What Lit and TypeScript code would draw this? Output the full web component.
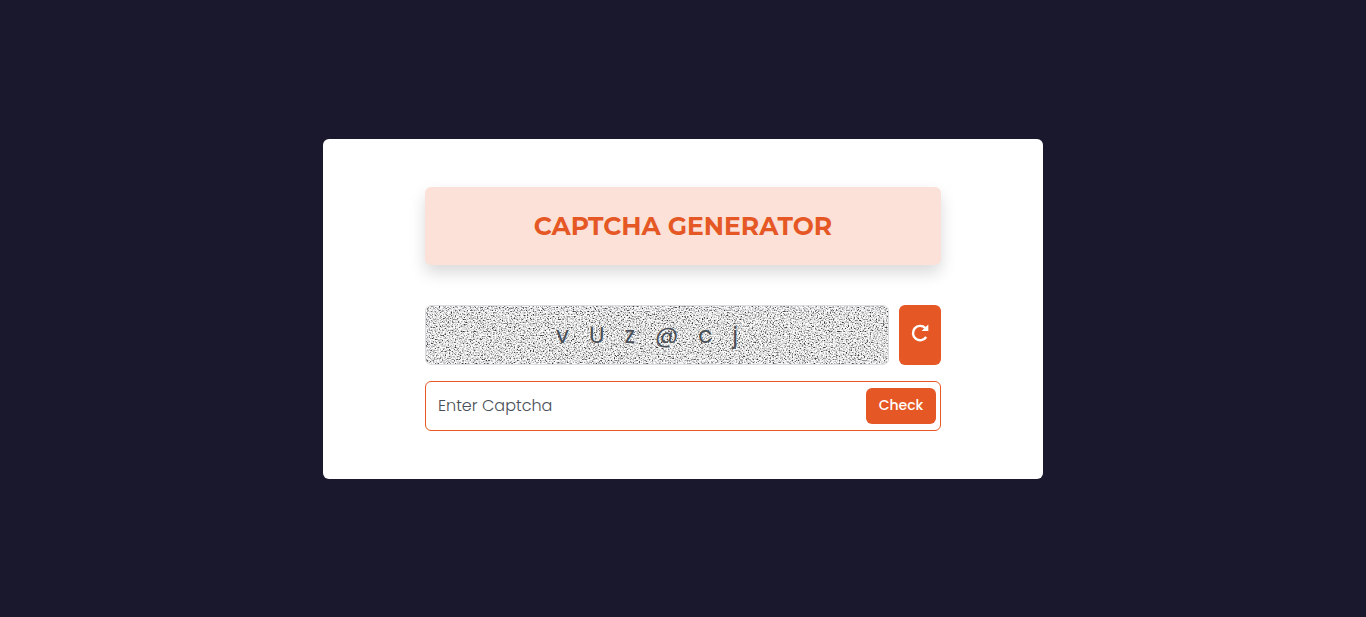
import { LitElement, html, css } from "lit";
import { customElement, state } from "lit/decorators.js";

const CHARACTERS = "ABCDEFGHIJKLMNOPQRSTUVWXYZabcdefghijklmnopqrstuvwxyz0123456789@#$%";

@customElement("app-root")
export class AppRoot extends LitElement {
  static styles = css`
    :host {
      display: flex;
      align-items: center;
      justify-content: center;
      box-sizing: border-box;
      min-height: 100vh;
      padding: 16px;
      background: #1a182c;
      font-family: Poppins, Inter, sans-serif;
    }
    * {
      box-sizing: border-box;
    }
    .card {
      width: 100%;
      max-width: 720px;
      padding: 48px 16px;
      border-radius: 6px;
      background: #fff;
    }
    .content {
      max-width: 516px;
      margin: 0 auto;
    }
    .title {
      margin: 0 0 40px;
      padding: 24px 16px;
      border-radius: 6px;
      background: #fbe1d8;
      box-shadow: 0 8px 16px rgba(0, 0, 0, 0.15);
      color: #e55825;
      font-family: Montserrat, Inter, sans-serif;
      font-size: 25px;
      line-height: 30px;
      font-weight: 700;
      text-align: center;
      text-transform: uppercase;
    }
    .challenge {
      display: flex;
      gap: 10px;
      margin-bottom: 16px;
    }
    .captcha {
      position: relative;
      flex: 1;
      height: 60px;
      overflow: hidden;
      border: 1px solid #dcdce0;
      border-radius: 6px;
      color: #494f57;
      font-size: 23px;
      line-height: 58px;
      letter-spacing: 20px;
      text-align: center;
    }
    .noise {
      position: absolute;
      inset: 0;
      width: 100%;
      height: 100%;
    }
    .code {
      position: relative;
    }
    .button {
      border: 0;
      border-radius: 6px;
      background: #e55825;
      color: #fff;
      font-family: inherit;
      cursor: pointer;
    }
    .refresh {
      display: flex;
      align-items: center;
      justify-content: center;
      width: 42px;
      padding: 0 0 4px;
    }
    .entry {
      display: flex;
      align-items: center;
      height: 50px;
      padding: 0 4px 0 12px;
      border: 1px solid #e55825;
      border-radius: 6px;
    }
    .field {
      flex: 1;
      min-width: 0;
      height: 100%;
      padding: 0;
      border: 0;
      outline: 0;
      background: none;
      color: #494f57;
      font-family: inherit;
      font-size: 16px;
      font-weight: 300;
    }
    .field::placeholder {
      color: #494f57;
      opacity: 1;
    }
    .check {
      width: 70px;
      height: 36px;
      padding: 0;
      font-size: 14px;
      font-weight: 500;
    }
  `;

  @state() private code = "vUz@cj";

  private refresh() {
    this.code = Array.from(
      { length: 6 },
      () => CHARACTERS[Math.floor(Math.random() * CHARACTERS.length)],
    ).join("");
  }

  render() {
    return html`
      <main class="card">
        <div class="content">
          <h1 class="title">Captcha Generator</h1>
          <div class="challenge">
            <div class="captcha">
              <svg class="noise" aria-hidden="true">
                <filter id="grain" x="0" y="0" width="100%" height="100%" color-interpolation-filters="sRGB">
                  <feTurbulence type="fractalNoise" baseFrequency="0.68 0.75" numOctaves="2" seed="7" />
                  <feColorMatrix
                    values="2.1 0.8 0 0 -0.78
                            2.1 0.8 0 0 -0.78
                            2.1 0.8 0 0 -0.78
                            0 0 0 0 1"
                  />
                  <feComponentTransfer>
                    <feFuncR type="table" tableValues="0.2 0.42 0.66 0.84 0.95 1" />
                    <feFuncG type="table" tableValues="0.2 0.42 0.66 0.84 0.95 1" />
                    <feFuncB type="table" tableValues="0.2 0.42 0.66 0.84 0.95 1" />
                  </feComponentTransfer>
                </filter>
                <rect width="100%" height="100%" filter="url(#grain)" />
              </svg>
              <span class="code">${this.code}</span>
            </div>
            <button class="button refresh" type="button" aria-label="New captcha" @click=${this.refresh}>
              <svg width="20" height="20" viewBox="0 0 20 20" fill="none" aria-hidden="true">
                <path d="M16.2 14A7.2 7.2 0 1 1 15.2 4.9" stroke="currentColor" stroke-width="2.4" />
                <path d="M18.3 1.6V8.1H11.5Z" fill="currentColor" />
              </svg>
            </button>
          </div>
          <form class="entry" @submit=${(event: Event) => event.preventDefault()}>
            <input class="field" type="text" aria-label="Enter Captcha" placeholder="Enter Captcha" />
            <button class="button check" type="submit">Check</button>
          </form>
        </div>
      </main>
    `;
  }
}
